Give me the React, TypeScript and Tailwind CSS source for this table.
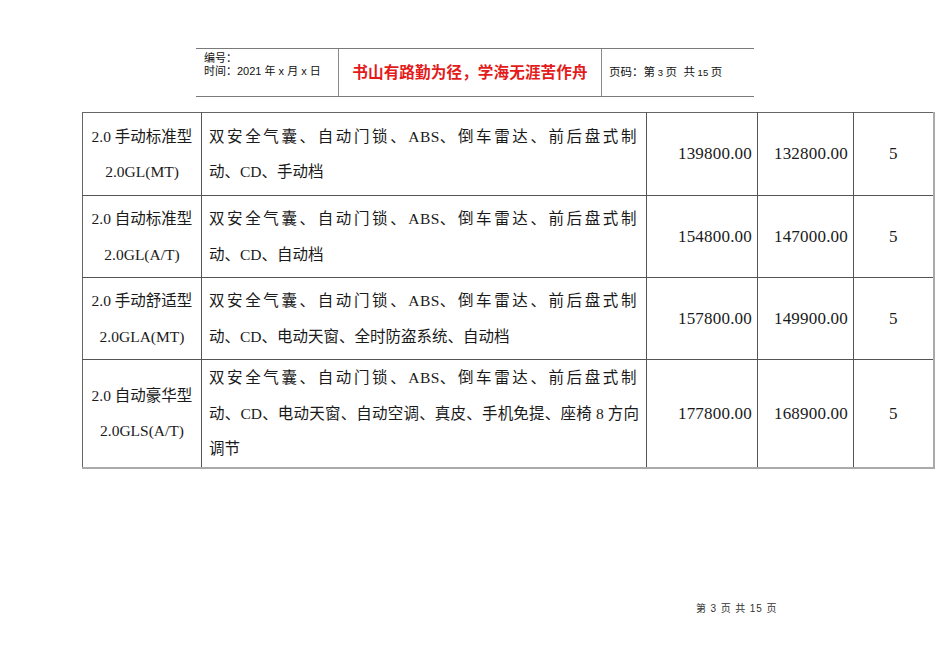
import React from "react";

const serif = { fontFamily: '"Liberation Serif", "Noto Sans CJK SC", serif' };
const sans = { fontFamily: '"Liberation Sans", "Noto Sans CJK SC", sans-serif' };

type Row = {
  name: string;
  code: string;
  lines: string[];
  price: string;
  deal: string;
  seats: string;
  h: string;
};

const rows: Row[] = [
  {
    name: "2.0 手动标准型",
    code: "2.0GL(MT)",
    lines: ["动、CD、手动档"],
    price: "139800.00",
    deal: "132800.00",
    seats: "5",
    h: "h-[83px]",
  },
  {
    name: "2.0 自动标准型",
    code: "2.0GL(A/T)",
    lines: ["动、CD、自动档"],
    price: "154800.00",
    deal: "147000.00",
    seats: "5",
    h: "h-[82px]",
  },
  {
    name: "2.0 手动舒适型",
    code: "2.0GLA(MT)",
    lines: ["动、CD、电动天窗、全时防盗系统、自动档"],
    price: "157800.00",
    deal: "149900.00",
    seats: "5",
    h: "h-[82px]",
  },
  {
    name: "2.0 自动豪华型",
    code: "2.0GLS(A/T)",
    lines: ["动、CD、电动天窗、自动空调、真皮、手机免提、座椅 8 方向", "调节"],
    price: "177800.00",
    deal: "168900.00",
    seats: "5",
    h: "h-[107px]",
  },
];

function FirstLine() {
  return (
    <div className="whitespace-nowrap overflow-hidden text-justify [text-align-last:justify] tracking-[2.5px]">
      双安全气囊、自动门锁、<span className="tracking-[0.4px]">ABS</span>、倒车雷达、前后盘式制
    </div>
  );
}

export default function App() {
  return (
    <div className="relative w-[950px] h-[672px] bg-white overflow-hidden text-[#111]">
      {/* Header */}
      <div
        className="ml-[196px] mt-[48px] flex w-[558px] h-[49px] border-t border-b border-[#7a7a7a]"
        style={sans}
      >
        <div className="w-[142px] pl-[8px] pt-[3px] text-[11px] leading-[13px] text-[#111]">
          <div>编号：</div>
          <div>时间：2021 年 x 月 x 日</div>
        </div>
        <div className="w-[264px] flex items-center justify-center border-l border-r border-[#8a8a8a]">
          <span className="text-[15.6px] font-bold text-[#e31b1b] leading-none tracking-[0.1px]">
            书山有路勤为径，学海无涯苦作舟
          </span>
        </div>
        <div className="flex-1 flex items-center pl-[7px] text-[11.5px] text-[#111]">
          <span className="whitespace-pre">
            页码：第<span className="text-[9.5px]"> 3 </span>页  共<span className="text-[9.5px]"> 15 </span>页
          </span>
        </div>
      </div>

      {/* Table */}
      <div className="ml-[82px] mt-[15px] w-[851px]">
        <table
          className="table-fixed border-collapse w-[851px] border-t border-l border-[#666] text-[#1a1a1a]"
          style={serif}
        >
          <colgroup>
            <col className="w-[119px]" />
            <col className="w-[445px]" />
            <col className="w-[111px]" />
            <col className="w-[96px]" />
            <col className="w-[80px]" />
          </colgroup>
          <tbody>
            {rows.map((r, i) => {
              const last = i === rows.length - 1;
              const bottom = last ? "border-b-2 border-b-[#aaaaaa]" : "border-b border-b-[#555]";
              return (
                <tr key={i} className={r.h}>
                  <td
                    className={`p-0 align-middle text-center text-[15.5px] leading-[35.5px] border-r border-r-[#555] ${bottom}`}
                  >
                    <div>{r.name}</div>
                    <div>{r.code}</div>
                  </td>
                  <td
                    className={`p-0 pl-[7px] pr-[7px] align-middle text-[15.5px] leading-[35.5px] border-r border-r-[#555] ${bottom}`}
                  >
                    <FirstLine />
                    {r.lines.map((l, j) => {
                      const justify = j < r.lines.length - 1;
                      return (
                        <div
                          key={j}
                          className={
                            justify
                              ? "whitespace-nowrap overflow-hidden text-justify [text-align-last:justify]"
                              : "whitespace-nowrap overflow-hidden"
                          }
                        >
                          {l}
                        </div>
                      );
                    })}
                  </td>
                  <td
                    className={`p-0 pr-[5px] align-middle text-right text-[17px] tracking-[0.2px] border-r border-r-[#555] ${bottom}`}
                  >
                    {r.price}
                  </td>
                  <td
                    className={`p-0 pr-[5px] align-middle text-right text-[17px] tracking-[0.2px] border-r border-r-[#555] ${bottom}`}
                  >
                    {r.deal}
                  </td>
                  <td
                    className={`p-0 align-middle text-center text-[17px] border-r-2 border-r-[#aaaaaa] ${bottom}`}
                  >
                    {r.seats}
                  </td>
                </tr>
              );
            })}
          </tbody>
        </table>
      </div>

      {/* Footer */}
      <div
        className="absolute left-[696px] top-[602px] text-[10px] leading-[14px] tracking-[0.9px] text-[#333]"
        style={sans}
      >
        第 3 页 共 15 页
      </div>
    </div>
  );
}
